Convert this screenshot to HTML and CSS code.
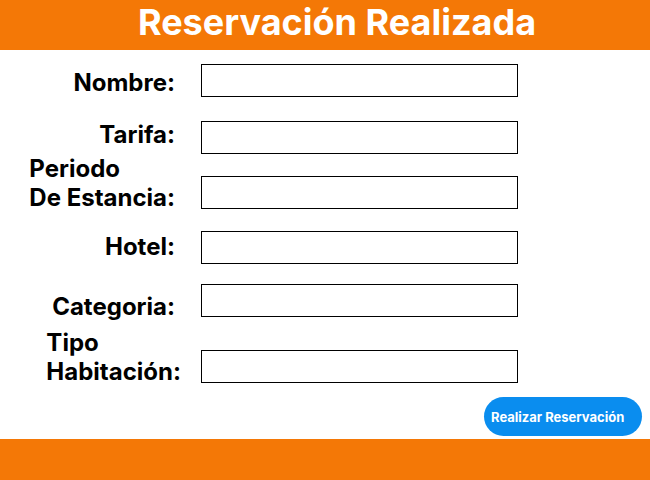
FILE: index.html
```html
<!DOCTYPE html>
<html lang="es">
<head>
<meta charset="utf-8">
<title>Reservación Realizada</title>
<link rel="stylesheet" href="styles.css">
</head>
<body>
<header class="topbar">
  <h1 class="title">Reservación Realizada</h1>
</header>
<main class="form">
  <div class="labels">
    <label class="label l-nombre">Nombre:</label>
    <label class="label l-tarifa">Tarifa:</label>
    <label class="label multi l-periodo">Periodo<br>De Estancia:</label>
    <label class="label l-hotel">Hotel:</label>
    <label class="label l-categoria">Categoria:</label>
    <label class="label multi l-tipo">Tipo<br>Habitación:</label>
  </div>
  <div class="fields">
    <input class="field f-nombre" type="text">
    <input class="field f-tarifa" type="text">
    <input class="field f-periodo" type="text">
    <input class="field f-hotel" type="text">
    <input class="field f-categoria" type="text">
    <input class="field f-tipo" type="text">
  </div>
</main>
<div class="actions">
  <button class="btn" type="button">Realizar Reservación</button>
</div>
<footer class="bottombar"></footer>
</body>
</html>
```
FILE: styles.css
```css
* { box-sizing: border-box; }
html, body { margin: 0; padding: 0; }
body {
  width: 650px;
  height: 480px;
  background: #ffffff;
  font-family: Inter, "Noto Sans", sans-serif;
  display: flex;
  flex-direction: column;
  overflow: hidden;
}
.topbar {
  height: 50px;
  background: #f47806;
  display: flex;
  align-items: flex-start;
  justify-content: center;
  padding-left: 24px;
}
.title {
  margin: 0;
  color: #ffffff;
  font-size: 36px;
  font-weight: 700;
  line-height: 44px;
}
.form {
  display: flex;
  height: 346px;
}
.labels {
  width: 175px;
  display: flex;
  flex-direction: column;
  align-items: flex-end;
  padding-top: 19px;
}
.label {
  font-size: 24px;
  font-weight: 700;
  color: #000000;
  line-height: 28px;
  text-align: left;
  white-space: nowrap;
}
.label.multi { line-height: 29px; }
.l-tarifa { margin-top: 24px; }
.l-periodo { margin-top: 5px; }
.l-hotel { margin-top: 21px; }
.l-categoria { margin-top: 32px; }
.l-tipo { margin-top: 7px; margin-right: -6px; }
.fields {
  margin-left: 26px;
  display: flex;
  flex-direction: column;
  padding-top: 14px;
}
.field {
  width: 317px;
  height: 33px;
  border: 1px solid #000000;
  background: #ffffff;
  margin: 0;
  padding: 0;
}
.f-tarifa { margin-top: 24px; }
.f-periodo { margin-top: 22px; }
.f-hotel { margin-top: 22px; }
.f-categoria { margin-top: 20px; }
.f-tipo { margin-top: 33px; }
.actions {
  height: 43px;
  display: flex;
  justify-content: flex-end;
  align-items: flex-start;
  padding-right: 8px;
  padding-top: 1px;
}
.btn {
  width: 158px;
  height: 39px;
  border: none;
  border-radius: 20px;
  background: #0a8def;
  color: #ffffff;
  font-family: Inter, "Noto Sans", sans-serif;
  font-size: 13px;
  font-weight: 700;
  text-align: left;
  padding: 0 0 0 7px;
}
.bottombar {
  flex: 1;
  background: #f47806;
}
```
